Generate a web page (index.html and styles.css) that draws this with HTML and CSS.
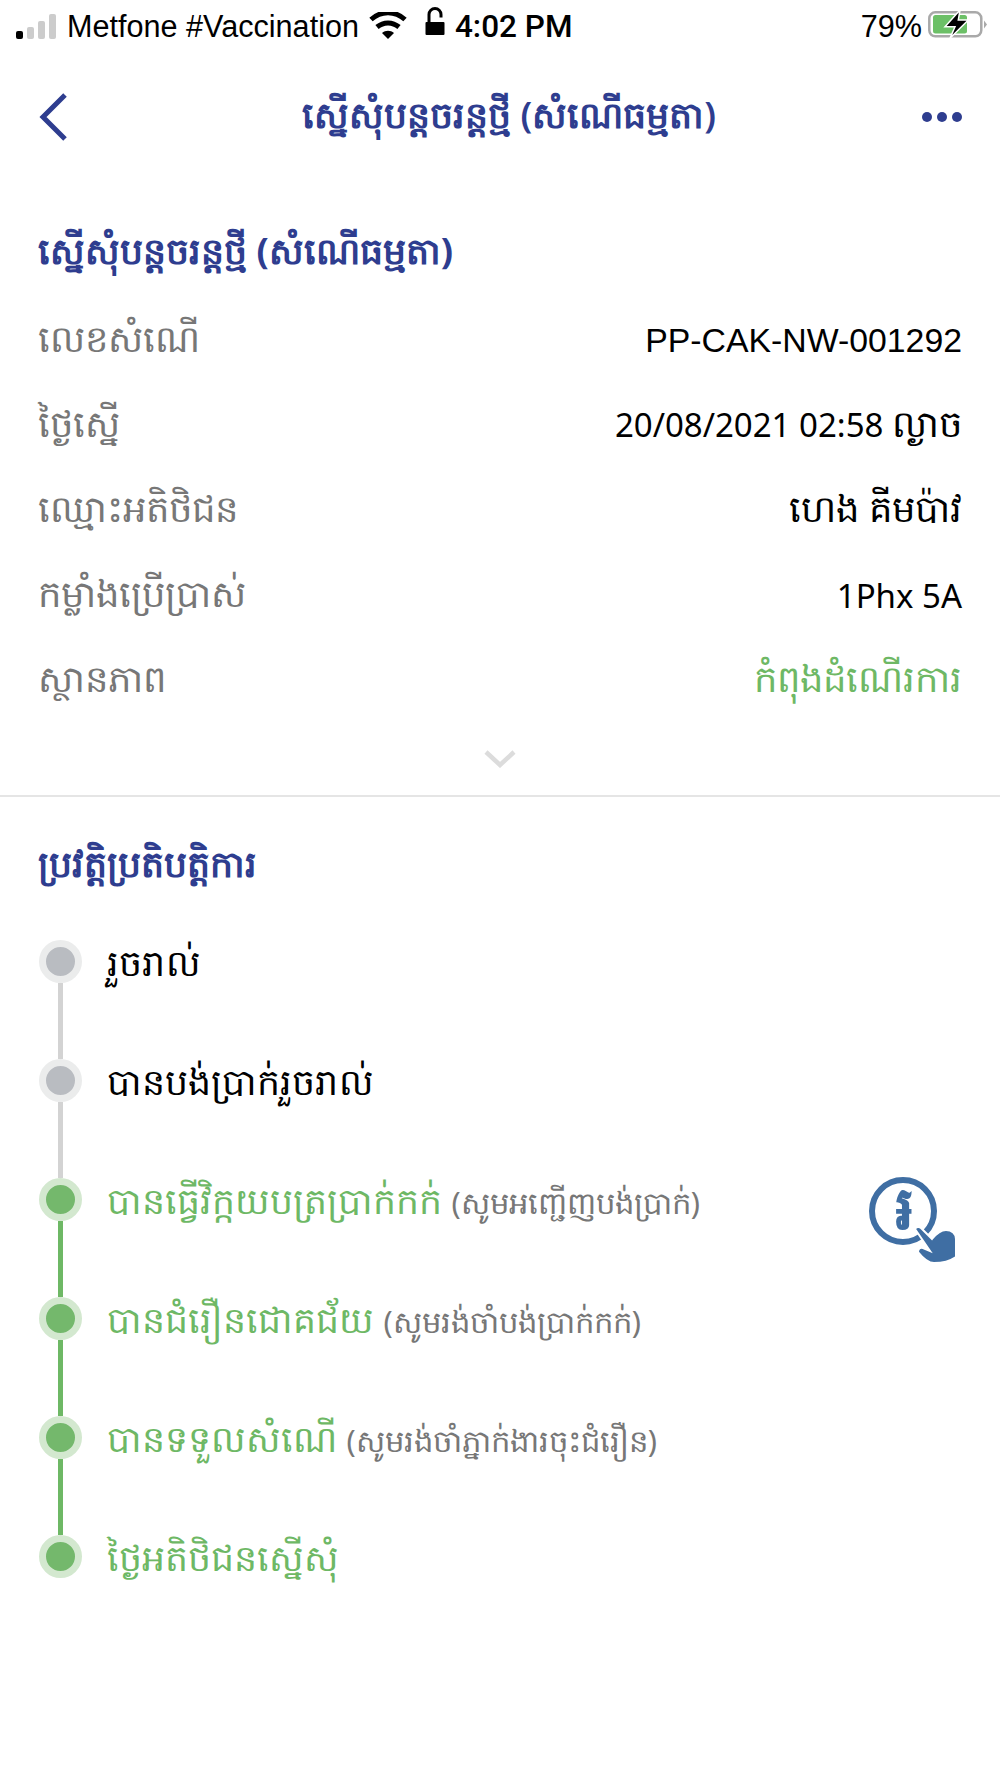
FILE: index.html
```html
<!DOCTYPE html>
<html lang="km">
<head>
    <meta charset="UTF-8">
    <meta name="viewport" content="width=device-width, initial-scale=1.0">
    <title>ស្នើសុំបន្តចរន្តថ្មី (សំណើធម្មតា)</title>
    <link rel="stylesheet" href="styles.css">
</head>
<body>
    <div class="status-bar">
        <div class="status-left">
            <div class="signal">
                <span class="bar bar-1"></span>
                <span class="bar bar-2"></span>
                <span class="bar bar-3"></span>
                <span class="bar bar-4"></span>
            </div>
            <span class="carrier">Metfone #Vaccination</span>
            <svg class="wifi" width="38" height="28" viewBox="0 0 38 28">
                <path d="M19 27l-6-6c3.500-3 8.500-3 12 0z" fill="#000"/>
                <path d="M8 15c6.500-5.500 15.500-5.500 22 0" fill="none" stroke="#000" stroke-width="5"/>
                <path d="M2 7.500c10-9 24-9 34 0" fill="none" stroke="#000" stroke-width="5"/>
            </svg>
            <svg class="lock" width="20" height="30" viewBox="0 0 20 30">
                <rect x="0.500" y="15" width="19" height="13" rx="1" fill="#000"/>
                <path d="M4 16V7.500a6 6 0 0 1 12 0v3" fill="none" stroke="#000" stroke-width="3"/>
            </svg>
            <span class="clock">4:02 PM</span>
        </div>
        <div class="status-right">
            <span class="percent">79%</span>
            <svg class="battery" width="59" height="32" viewBox="0 0 59 32">
                <rect x="1.300" y="4.300" width="52" height="24" rx="6" fill="#fff" stroke="#a9a9a9" stroke-width="2.500"/>
                <rect x="5" y="7" width="34" height="18.500" rx="2.500" fill="#6cc067"/>
                <path d="M56 12.500l3 4-3 4z" fill="#a9a9a9"/>
                <path d="M32 2L17 18.700h10L22 30.300 40.300 12H30.300z" fill="#000" stroke="#fff" stroke-width="1.500"/>
            </svg>
        </div>
    </div>

    <div class="nav-bar">
        <svg class="back" width="30" height="48" viewBox="0 0 30 48">
            <path d="M27 2L5 24l22 22" fill="none" stroke="#2e3d8f" stroke-width="5"/>
        </svg>
        <h1 class="nav-title">ស្នើសុំបន្តចរន្តថ្មី (សំណើធម្មតា)</h1>
        <div class="more">
            <span class="more-dot"></span>
            <span class="more-dot"></span>
            <span class="more-dot"></span>
        </div>
    </div>

    <section class="details">
        <h2 class="section-title">ស្នើសុំបន្តចរន្តថ្មី (សំណើធម្មតា)</h2>
        <div class="row">
            <span class="row-label">លេខសំណើ</span>
            <span class="row-code">PP-CAK-NW-001292</span>
        </div>
        <div class="row">
            <span class="row-label">ថ្ងៃស្នើ</span>
            <span>20/08/2021 02:58 <span class="km">ល្ងាច</span></span>
        </div>
        <div class="row">
            <span class="row-label">ឈ្មោះអតិថិជន</span>
            <span class="km">ហេង គីមប៉ាវ</span>
        </div>
        <div class="row">
            <span class="row-label">កម្លាំងប្រើប្រាស់</span>
            <span>1Phx 5A</span>
        </div>
        <div class="row">
            <span class="row-label">ស្ថានភាព</span>
            <span class="km status-green">កំពុងដំណើរការ</span>
        </div>
        <div class="expand">
            <svg width="32" height="18" viewBox="0 0 32 18">
                <path d="M2 2l14 13L30 2" fill="none" stroke="#dcdcdc" stroke-width="4.500"/>
            </svg>
        </div>
    </section>

    <section class="history">
        <h2 class="section-title">ប្រវត្តិប្រតិបត្តិការ</h2>
        <ul class="timeline">
            <li class="step">
                <div class="marker"><span class="dot"></span><span class="line"></span></div>
                <div class="step-text">រួចរាល់</div>
            </li>
            <li class="step">
                <div class="marker"><span class="dot"></span><span class="line"></span></div>
                <div class="step-text">បានបង់ប្រាក់រួចរាល់</div>
            </li>
            <li class="step done">
                <div class="marker"><span class="dot"></span><span class="line"></span></div>
                <div class="step-text">បានធ្វើវិក្កយបត្រប្រាក់កក់ <small>(សូមអញ្ជើញបង់ប្រាក់)</small></div>
                <div class="pay-icon">
                    <svg width="88" height="87" viewBox="0 0 88 87">
                        <circle cx="34" cy="34" r="31" fill="none" stroke="#3f6ea3" stroke-width="6"/>
                        <path d="M46 52c1-2 4-3 6-1l11 11c4-5 9-9 14-9 6 0 10 4 10 9v18c-6 4-14 6-22 6-6 0-12-6-16-11 0-3 2-5 5-4l7 3z" fill="#3f6ea3" stroke="#fff" stroke-width="2"/>
                    </svg>
                    <span class="riel">៛</span>
                </div>
            </li>
            <li class="step done">
                <div class="marker"><span class="dot"></span><span class="line"></span></div>
                <div class="step-text">បានជំរឿនជោគជ័យ <small>(សូមរង់ចាំបង់ប្រាក់កក់)</small></div>
            </li>
            <li class="step done">
                <div class="marker"><span class="dot"></span><span class="line"></span></div>
                <div class="step-text">បានទទួលសំណើ <small>(សូមរង់ចាំភ្នាក់ងារចុះជំរឿន)</small></div>
            </li>
            <li class="step done last">
                <div class="marker"><span class="dot"></span></div>
                <div class="step-text">ថ្ងៃអតិថិជនស្នើសុំ</div>
            </li>
        </ul>
    </section>
</body>
</html>
```

FILE: styles.css
```css
body {
    margin: 0;
    font-family: "Noto Sans", "Liberation Sans", sans-serif;
    background-color: #fff;
    color: #000;
}
.status-bar {
    height: 52px;
    display: flex;
    justify-content: space-between;
    align-items: center;
    padding: 0 13px 0 16px;
    font-family: "Liberation Sans", sans-serif;
    font-size: 30.600px;
}
.status-left, .status-right {
    display: flex;
    align-items: center;
}
.signal {
    display: flex;
    align-items: flex-end;
    gap: 4px;
    height: 25px;
    margin-right: 11px;
}
.bar {
    width: 7px;
    background-color: #ccc;
    border-radius: 2px;
}
.bar-1 {
    height: 8px;
    background-color: #000;
}
.bar-2 { height: 12px; }
.bar-3 { height: 18px; }
.bar-4 { height: 25px; }
.wifi {
    margin-left: 10px;
}
.lock {
    margin-left: 18px;
    margin-bottom: 8px;
}
.clock {
    margin-left: 10px;
    font-family: Roboto, sans-serif;
    font-weight: 500;
    font-size: 31.500px;
}
.percent {
    margin-right: 6px;
}
.battery {
    margin-bottom: 4px;
}
.nav-bar {
    height: 130px;
    display: flex;
    align-items: center;
    justify-content: space-between;
    padding: 0 38px;
}
.nav-title {
    margin: 0 0 0 28px;
    font-size: 36.300px;
    font-weight: 600;
    color: #2e3d8f;
}
.more {
    display: flex;
    gap: 5px;
}
.more-dot {
    width: 10px;
    height: 10px;
    border-radius: 50%;
    background-color: #2e3d8f;
}
.section-title {
    margin: 0;
    font-size: 36.300px;
    font-weight: 700;
    color: #2e3d8f;
    line-height: 48px;
}
.details {
    padding: 44px 38px 0;
    height: 569px;
    border-bottom: 2px solid #e5e5e5;
}
.details .section-title {
    margin-bottom: 24px;
}
.row {
    height: 85px;
    display: flex;
    justify-content: space-between;
    align-items: center;
    font-size: 33px;
}
.row-label, .km {
    font-size: 37px;
}
.row-label {
    color: #777;
}
.row-code {
    font-family: "Liberation Sans", sans-serif;
    font-size: 33.800px;
}
.status-green {
    color: #6eb865;
}
.expand {
    display: flex;
    justify-content: center;
    margin-top: 27px;
}
.history {
    padding: 42px 38px 0;
}
.timeline {
    list-style: none;
    margin: 53px 0 0;
    padding: 0;
}
.step {
    height: 119px;
    display: flex;
    align-items: flex-start;
    font-size: 36.300px;
    position: relative;
}
.marker {
    width: 44px;
    height: 100%;
    margin-right: 25px;
    display: flex;
    flex-direction: column;
    align-items: center;
}
.dot {
    width: 29px;
    height: 29px;
    flex: none;
    border-radius: 50%;
    background-color: #b9bcc1;
    border: 7px solid #ebecec;
}
.line {
    width: 5px;
    flex: 1;
    background-color: #d3d3d3;
}
.step-text {
    line-height: 44px;
}
.step-text small {
    font-size: 30.700px;
    color: #777;
}
.done .dot {
    background-color: #74b86c;
    border-color: #d3e8cf;
}
.done .line {
    background-color: #6eb865;
}
.done .step-text {
    color: #6eb865;
}
.pay-icon {
    position: absolute;
    right: 5px;
    top: -1px;
    width: 88px;
    height: 87px;
}
.riel {
    position: absolute;
    left: 0;
    top: 0;
    width: 70px;
    height: 68px;
    display: flex;
    align-items: center;
    justify-content: center;
    font-size: 60px;
    font-weight: 700;
    color: #3f6ea3;
}
```
